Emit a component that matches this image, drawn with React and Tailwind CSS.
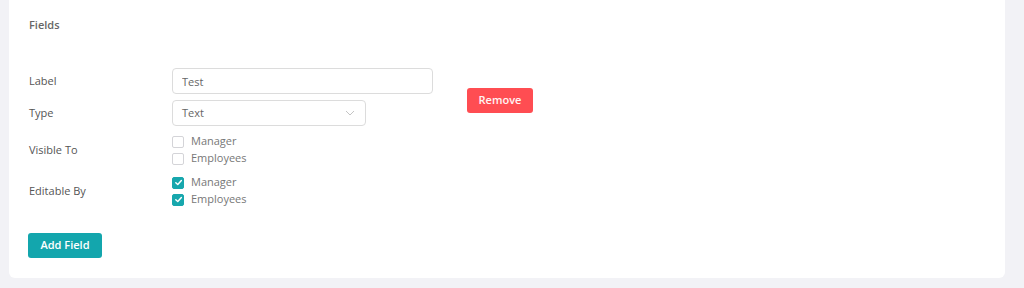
import React, { useState } from 'react';

const Check = ({ checked }) => (
    <span
        className={
            'w-[12px] h-[12px] rounded-[2px] flex items-center justify-center border ' +
            (checked ? 'bg-[#17a7ad] border-[#17a7ad]' : 'bg-white border-[#d4d4d8]')
        }
    >
        {checked && (
            <svg width="9" height="9" viewBox="0 0 10 10" fill="none">
                <path d="M2 5.2 L4.2 7.3 L8.2 2.8" stroke="#fff" strokeWidth="1.6" strokeLinecap="round" strokeLinejoin="round" />
            </svg>
        )}
    </span>
);

const CheckGroup = ({ values }) => (
    <div className="flex flex-col">
        {['Manager', 'Employees'].map((name, i) => (
            <div key={name} className="h-[17px] flex items-center gap-[7px]">
                <Check checked={values[i]} />
                <span className="text-[11px] text-[#777]">{name}</span>
            </div>
        ))}
    </div>
);

export default function App() {
    const [label, setLabel] = useState('Test');

    return (
        <div className="w-[1024px] h-[288px] bg-[#f2f2f6] font-['Open_Sans',sans-serif]">
            <div className="ml-[9px] w-[996px] h-[278px] bg-white rounded-b-[6px] pl-[20px] pt-[17px]">
                <div className="text-[11px] leading-[16px] font-semibold text-[#666]">Fields</div>

                <div className="flex mt-[35px]">
                    <div className="flex flex-col">
                        <div className="flex items-center h-[26px]">
                            <span className="w-[143px] text-[11px] text-[#555]">Label</span>
                            <input
                                value={label}
                                onChange={(e) => setLabel(e.target.value)}
                                className="w-[261px] h-[26px] border border-[#dcdcdc] rounded-[4px] px-[9px] text-[11px] text-[#666] outline-none"
                            />
                        </div>
                        <div className="flex items-center h-[26px] mt-[6px]">
                            <span className="w-[143px] text-[11px] text-[#555]">Type</span>
                            <div className="w-[194px] h-[26px] border border-[#dcdcdc] rounded-[4px] px-[9px] flex items-center justify-between">
                                <span className="text-[11px] text-[#666]">Text</span>
                                <svg width="10" height="6" viewBox="0 0 10 6" fill="none" className="mr-[1px]">
                                    <path d="M1 1 L5 5 L9 1" stroke="#c4c4c4" strokeWidth="1" />
                                </svg>
                            </div>
                        </div>
                        <div className="flex items-center mt-[7px]">
                            <span className="w-[143px] text-[11px] text-[#555]">Visible To</span>
                            <CheckGroup values={[false, false]} />
                        </div>
                        <div className="flex items-center mt-[7px]">
                            <span className="w-[143px] text-[11px] text-[#555]">Editable By</span>
                            <CheckGroup values={[true, true]} />
                        </div>
                    </div>
                    <div className="ml-[34px] mt-[18px]">
                        <button className="w-[66px] h-[25px] rounded-[3px] bg-[#ff4d52] text-[#fff4f4] text-[11px] font-semibold">
                            Remove
                        </button>
                    </div>
                </div>

                <button className="mt-[25px] -ml-[1px] w-[74px] h-[25px] rounded-[3px] bg-[#13a6ad] text-white text-[11px] font-semibold">
                    Add Field
                </button>
            </div>
        </div>
    );
}
